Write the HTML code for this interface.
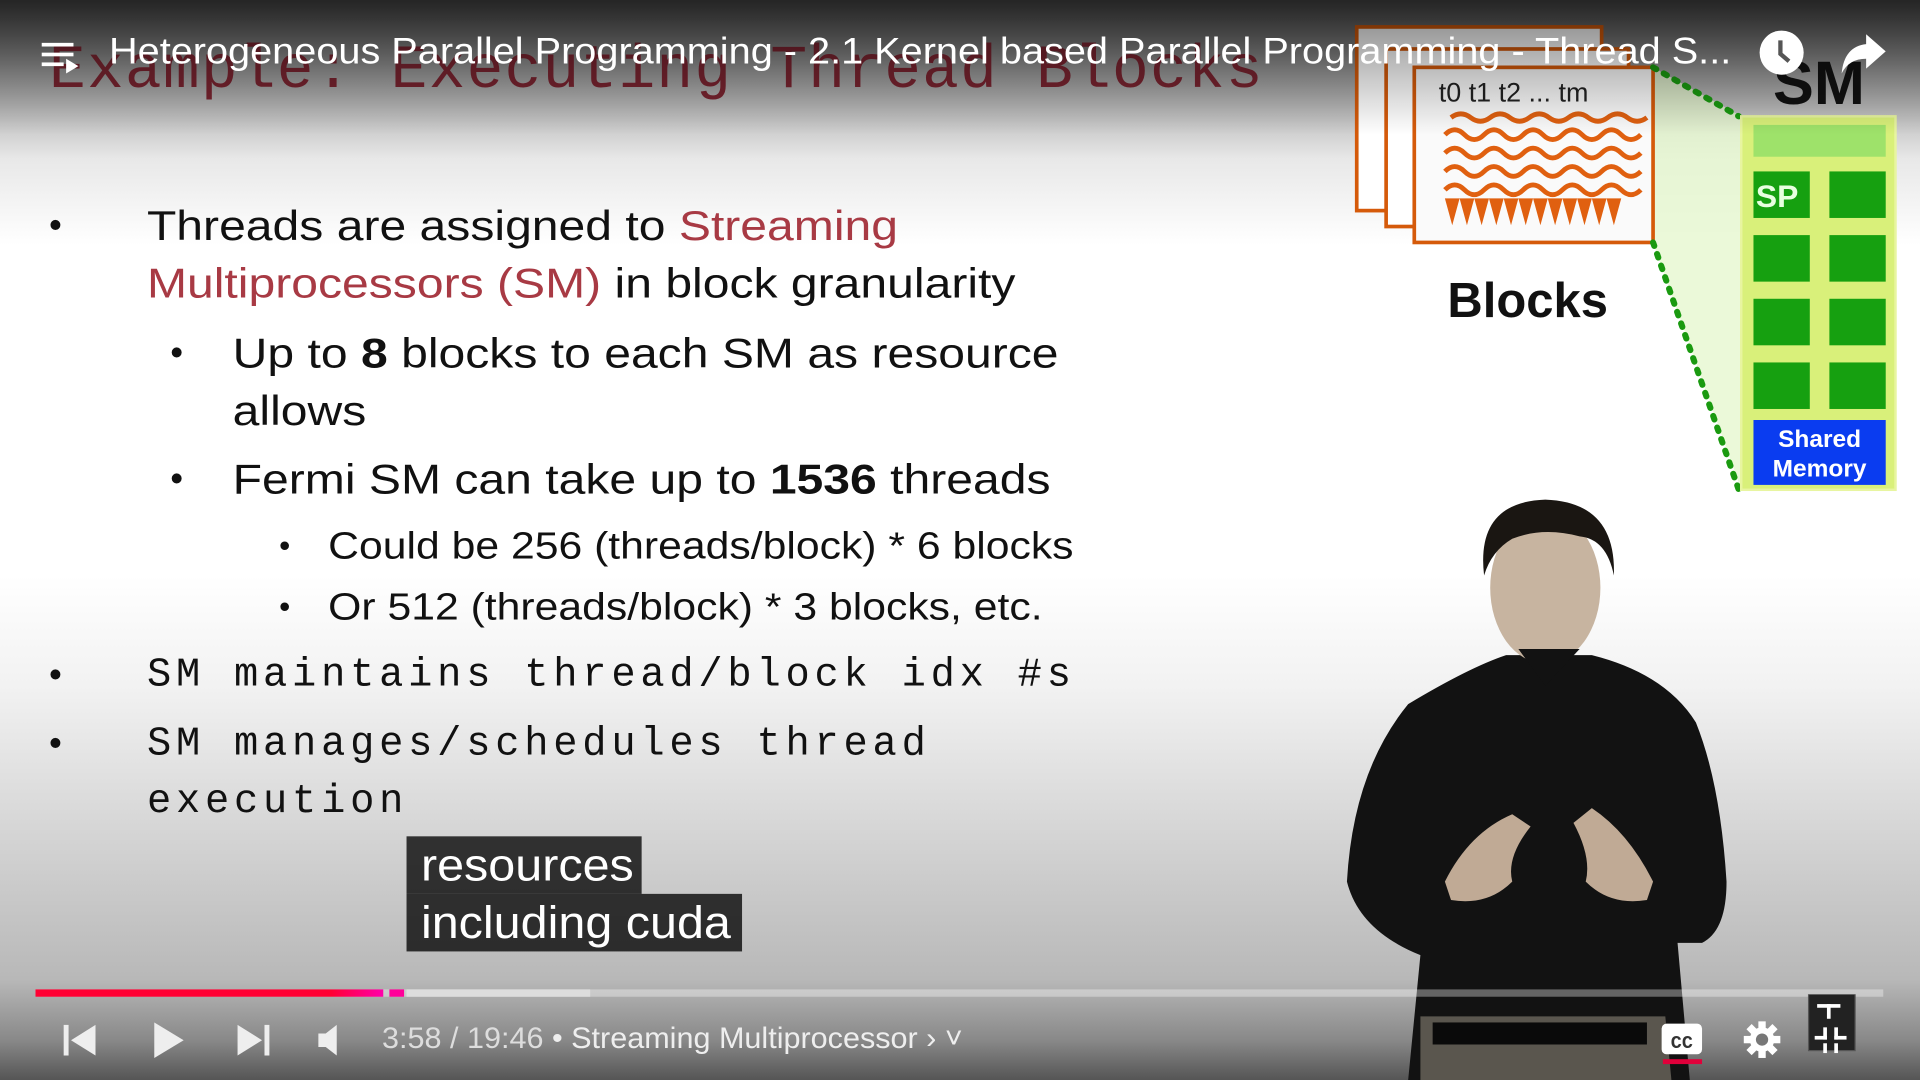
<!DOCTYPE html>
<html><head><meta charset="utf-8"><style>
html,body{margin:0;padding:0;width:1920px;height:1080px;overflow:hidden;background:#000}
#w{position:absolute;left:0;top:0;width:1568px;height:882px;transform:scale(1.22449);transform-origin:0 0;overflow:hidden;
background:linear-gradient(#4a4a4a 0px,#9a9a9a 60px,#e8e8e8 130px,#fff 200px,#fff 470px,#f2f2f2 560px,#d0d0d0 700px,#b8b8b8 800px,#888 850px,#555 882px);font-family:"Liberation Sans",sans-serif}
.t{position:absolute;white-space:nowrap;color:#111;transform-origin:0 0}
.s{font-size:34px;transform:scaleX(1.155)}
.s2{font-size:31px;transform:scaleX(1.125)}
.m{font-family:"Liberation Mono",monospace;font-size:33px;letter-spacing:3.9px}
.red{color:#a83a44}
.b{font-weight:bold}
.cap{position:absolute;background:rgba(8,8,8,.8);color:#fff;height:47px;line-height:47px}
.cap span{display:inline-block;font-size:37px;transform:scaleX(1.07);transform-origin:0 0;padding-left:11px}
.ctl{position:absolute;color:#eee;transform-origin:0 0}
</style></head><body><div id="w">
<div class="t" style="left:40px;top:30px;font-family:'Liberation Mono',monospace;font-size:50px;color:#7a2430;letter-spacing:1px">Example: Executing Thread Blocks</div>

<svg style="position:absolute;left:0;top:0" width="1568" height="882">
<polygon points="1350,55 1422,95 1422,400 1350,198" fill="#e6f7cf" opacity=".8"/>
<rect x="1108" y="22" width="200" height="150" fill="#fff" stroke="#d55a0a" stroke-width="3"/>
<rect x="1132" y="40" width="198" height="145" fill="#fff" stroke="#d55a0a" stroke-width="3"/>
<rect x="1155" y="55" width="195" height="143" fill="#fafafa" stroke="#d55a0a" stroke-width="3"/>
<g stroke="#e06010" stroke-width="4" fill="none">
<path d="M1185 96 q8 -6 16 0 t16 0 t16 0 t16 0 t16 0 t16 0 t16 0 t16 0 t16 0 t16 0"/>
<path d="M1180 110 q8 -8 16 0 t16 0 t16 0 t16 0 t16 0 t16 0 t16 0 t16 0 t16 0 t16 0"/>
<path d="M1180 125 q8 -8 16 0 t16 0 t16 0 t16 0 t16 0 t16 0 t16 0 t16 0 t16 0 t16 0"/>
<path d="M1180 140 q8 -8 16 0 t16 0 t16 0 t16 0 t16 0 t16 0 t16 0 t16 0 t16 0 t16 0"/>
<path d="M1180 155 q8 -8 16 0 t16 0 t16 0 t16 0 t16 0 t16 0 t16 0 t16 0 t16 0 t16 0"/>
</g>
<path d="M1180 162 l6 22 l6 -22 l6 22 l6 -22 l6 22 l6 -22 l6 22 l6 -22 l6 22 l6 -22 l6 22 l6 -22 l6 22 l6 -22 l6 22 l6 -22 l6 22 l6 -22 l6 22 l6 -22 l6 22 l6 -22 l6 22 l6 -22 Z" fill="#e06010"/>
<text x="1175" y="83" font-size="22" font-family="Liberation Sans" fill="#222">t0 t1 t2 ... tm</text>
<g stroke="#1a9a10" stroke-width="5" stroke-dasharray="3 7" stroke-linecap="round"><line x1="1350" y1="55" x2="1420" y2="95"/><line x1="1350" y1="198" x2="1420" y2="400"/></g>
<rect x="1422" y="95" width="126" height="305" fill="#d9f07a" stroke="#e8f5a0" stroke-width="2"/>
<rect x="1432" y="102" width="108" height="26" fill="#9ee26a"/>
<g fill="#16a010">
<rect x="1432" y="140" width="46" height="38"/><rect x="1494" y="140" width="46" height="38"/>
<rect x="1432" y="192" width="46" height="38"/><rect x="1494" y="192" width="46" height="38"/>
<rect x="1432" y="244" width="46" height="38"/><rect x="1494" y="244" width="46" height="38"/>
<rect x="1432" y="296" width="46" height="38"/><rect x="1494" y="296" width="46" height="38"/>
</g>
<text x="1434" y="169" font-size="26" font-weight="bold" font-family="Liberation Sans" fill="#e8ffe0">SP</text>
<rect x="1432" y="343" width="108" height="53" fill="#0a3cf0"/>
<text x="1486" y="365" font-size="20" font-weight="bold" text-anchor="middle" font-family="Liberation Sans" fill="#fff">Shared</text>
<text x="1486" y="389" font-size="20" font-weight="bold" text-anchor="middle" font-family="Liberation Sans" fill="#fff">Memory</text>
<text x="1448" y="85" font-size="50" font-weight="bold" font-family="Liberation Sans" fill="#111">SM</text>
<text x="1182" y="259" font-size="40" font-weight="bold" font-family="Liberation Sans" fill="#111">Blocks</text>

<path d="M1150 575 Q1200 545 1230 535 L1300 535 Q1360 550 1385 590 Q1405 640 1410 720 Q1410 760 1390 770 L1370 770 L1380 882 L1150 882 L1160 780 Q1110 760 1100 720 Q1105 630 1150 575Z" fill="#121212"/>
<ellipse cx="1262" cy="480" rx="45" ry="62" fill="#c7b4a0"/>
<path d="M1212 470 Q1205 410 1262 408 Q1320 410 1318 470 Q1312 440 1290 438 Q1260 430 1235 440 Q1218 450 1212 470Z" fill="#1a1612"/>
<path d="M1240 530 L1262 560 L1290 530 Z" fill="#121212"/>
<path d="M1180 720 Q1200 680 1235 665 L1250 675 Q1230 700 1235 720 Q1215 740 1185 735Z" fill="#c0aa95"/>
<path d="M1350 720 Q1330 680 1300 660 L1285 672 Q1300 700 1295 720 Q1315 740 1345 735Z" fill="#c0aa95"/>
<path d="M1160 830 L1360 830 L1365 882 L1160 882Z" fill="#5a564e"/>
<rect x="1170" y="835" width="175" height="18" fill="#0a0a0a"/>
</svg>
<div style="position:absolute;left:0;top:0;width:1568px;height:110px;background:linear-gradient(rgba(0,0,0,.5),rgba(0,0,0,0))"></div>

<div class="t" style="left:40px;top:168px;font-size:30px">•</div>
<div class="t s" style="left:120px;top:166px">Threads are assigned to <span class="red">Streaming</span></div>
<div class="t s" style="left:120px;top:213px"><span class="red">Multiprocessors (SM)</span> in block granularity</div>
<div class="t" style="left:139px;top:272px;font-size:30px">•</div>
<div class="t s" style="left:190px;top:270px">Up to <b>8</b> blocks to each SM as resource</div>
<div class="t s" style="left:190px;top:317px">allows</div>
<div class="t" style="left:139px;top:375px;font-size:30px">•</div>
<div class="t s" style="left:190px;top:373px">Fermi SM can take up to <b>1536</b> threads</div>
<div class="t" style="left:228px;top:430px;font-size:26px">•</div>
<div class="t s2" style="left:268px;top:428px">Could be 256 (threads/block) * 6 blocks</div>
<div class="t" style="left:228px;top:480px;font-size:26px">•</div>
<div class="t s2" style="left:268px;top:478px">Or 512 (threads/block) * 3 blocks, etc.</div>
<div class="t" style="left:40px;top:535px;font-size:30px">•</div>
<div class="t m" style="left:120px;top:533px">SM maintains thread/block idx #s</div>
<div class="t" style="left:40px;top:591px;font-size:30px">•</div>
<div class="t m" style="left:120px;top:589px">SM manages/schedules thread</div>
<div class="t m" style="left:120px;top:636px">execution</div>

<div class="cap" style="left:332px;top:683px;width:192px"><span>resources</span></div>
<div class="cap" style="left:332px;top:730px;width:274px"><span>including cuda</span></div>

<svg style="position:absolute;left:34px;top:33px" width="32" height="28"><g fill="#fff"><rect x="0" y="2" width="26" height="3"/><rect x="0" y="10" width="26" height="3"/><rect x="0" y="18" width="18" height="3"/><path d="M20 15 L30 21 L20 27Z"/></g></svg>
<div class="t" style="left:89px;top:26px;font-size:30px;color:#fff;transform:scaleX(1.08)">Heterogeneous Parallel Programming - 2.1 Kernel based Parallel Programming - Thread S...</div>
<svg style="position:absolute;left:1436px;top:24px" width="40" height="40"><circle cx="19" cy="19" r="18" fill="#fff"/><path d="M18 9 V20 L25 26" stroke="#555" stroke-width="3.5" fill="none"/></svg>
<svg style="position:absolute;left:1502px;top:26px" width="40" height="36"><path d="M22 2 L38 16 L22 30 V22 Q8 22 2 34 Q4 12 22 10Z" fill="#fff"/></svg>

<div style="position:absolute;left:29px;top:808px;width:1509px;height:6px;background:rgba(255,255,255,.35)"></div>
<div style="position:absolute;left:332px;top:808px;width:150px;height:6px;background:#ddd"></div>
<div style="position:absolute;left:29px;top:808px;width:284px;height:6px;background:linear-gradient(90deg,#f03 85%,#f0a)"></div>
<div style="position:absolute;left:318px;top:808px;width:12px;height:6px;background:#f09"></div>

<svg style="position:absolute;left:50px;top:835px" width="260" height="30" fill="#eee">
<rect x="2" y="2" width="4" height="25"/><path d="M28 2 V27 L8 14.5Z"/>
<path d="M76 0 L100 14.5 L76 29Z"/>
<path d="M144 2 V27 L164 14.5Z"/><rect x="166" y="2" width="4" height="25"/>
<path d="M210 9 H216 L225 2 V27 L216 20 H210Z"/>
</svg>
<div class="ctl" style="left:312px;top:835px;font-size:24px;transform:scaleX(1.04);white-space:nowrap"><span style="color:#ddd">3:58 / 19:46</span> • Streaming Multiprocessor › ˅</div>
<svg style="position:absolute;left:1356px;top:834px" width="36" height="36"><rect x="1" y="2" width="33" height="25" rx="4" fill="#fff"/><text x="17.5" y="22" font-size="15" font-weight="bold" text-anchor="middle" font-family="Liberation Mono" fill="#333">CC</text><rect x="2" y="31" width="32" height="4" fill="#e0003a"/></svg>
<svg style="position:absolute;left:1424px;top:834px" width="30" height="30"><g fill="#fff" transform="translate(15,15)"><circle r="10"/><g><rect x="-3" y="-15" width="6" height="30"/><rect x="-3" y="-15" width="6" height="30" transform="rotate(45)"/><rect x="-3" y="-15" width="6" height="30" transform="rotate(90)"/><rect x="-3" y="-15" width="6" height="30" transform="rotate(135)"/></g><circle r="5" fill="#777"/></g></svg>
<svg style="position:absolute;left:1476px;top:812px" width="44" height="52"><rect x="1" y="0" width="38" height="46" fill="#222" stroke="#555"/><g fill="#fff"><rect x="16" y="8" width="3" height="12"/><rect x="8" y="8" width="19" height="3"/><rect x="6" y="34" width="10" height="3"/><rect x="13" y="27" width="3" height="10"/><rect x="22" y="34" width="10" height="3"/><rect x="22" y="27" width="3" height="10"/><rect x="13" y="40" width="3" height="8"/><rect x="22" y="40" width="3" height="8"/></g></svg>
</div></body></html>
